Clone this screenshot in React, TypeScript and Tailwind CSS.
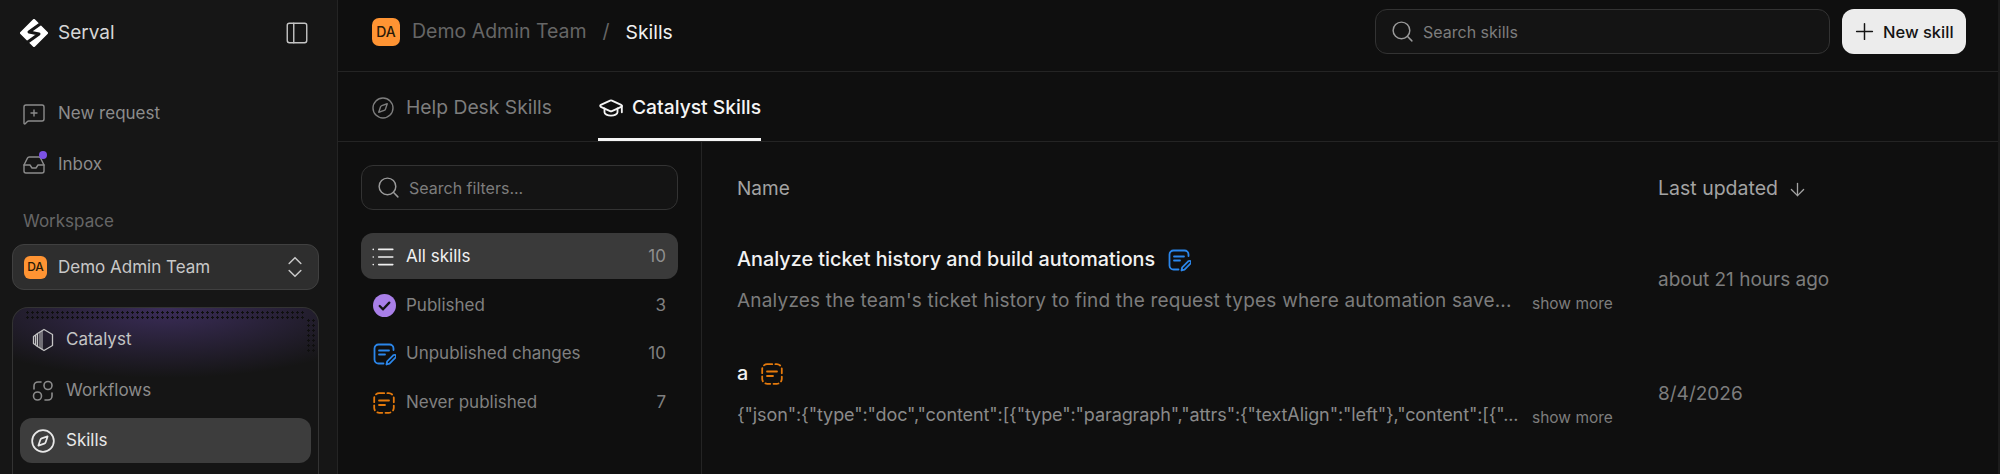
import {
  ArrowDown,
  ChevronsUpDown,
  Compass,
  GraduationCap,
  Inbox,
  List,
  MessageSquarePlus,
  PanelLeft,
  Plus,
  Search,
} from "lucide-react";

function Logo() {
  return (
    <svg viewBox="0 0 28 28" className="h-7 w-7" fill="none">
      <path d="M14 1.5 26.5 14 14 26.5 1.5 14Z" fill="#fff" stroke="#fff" strokeWidth="3" strokeLinejoin="round" />
      <path d="M23 3 9 13l10 2L5 25" stroke="#161616" strokeWidth="3" strokeLinejoin="round" />
    </svg>
  );
}

function CatalystIcon() {
  return (
    <svg viewBox="0 0 22 24" className="h-[24px] w-[22px]" fill="none" stroke="currentColor" strokeWidth="1.3" strokeLinejoin="round">
      <path d="M12 1.5 20.5 6.5V17.5L12 22.5 5.5 18.5V5.5Z" />
      <path d="M5.5 5.5 3.6 7V17L5.5 18.5M3.6 7 1.5 8.5V15.5L3.6 17" />
      <path d="M8 4V20M10 2.8V21.3" strokeWidth="1" />
    </svg>
  );
}

function WorkflowsIcon() {
  return (
    <svg viewBox="0 0 22 22" className="h-[22px] w-[22px]" fill="none" stroke="currentColor" strokeWidth="1.6" strokeLinecap="round">
      <circle cx="16" cy="5.5" r="4" />
      <circle cx="5.5" cy="16" r="4" />
      <path d="M2 9V6a4 4 0 0 1 4-4h3" />
      <path d="M20 13v3a4 4 0 0 1-4 4h-3" />
    </svg>
  );
}

function PublishedIcon() {
  return (
    <svg viewBox="0 0 24 24" className="h-[23px] w-[23px]">
      <circle cx="12" cy="12" r="12" fill="#a97fe8" />
      <path d="M7 12.5 10.5 16 17 9" fill="none" stroke="#141414" strokeWidth="2.4" strokeLinecap="round" strokeLinejoin="round" />
    </svg>
  );
}

function UnpublishedIcon() {
  return (
    <svg viewBox="0 0 23 23" className="h-[23px] w-[23px]" fill="none" stroke="#2b86ea" strokeWidth="1.8" strokeLinecap="round" strokeLinejoin="round">
      <path d="M20.5 7V5.5a4 4 0 0 0-4-4h-11a4 4 0 0 0-4 4v11a4 4 0 0 0 4 4h5" />
      <path d="M6 7.5h10M6 11.5h6" />
      <path d="M13.5 21.5l.7-3.2 6-6c.8-.7 2-.7 2.5 0 .5.7.4 1.7-.2 2.3l-6 6z" />
    </svg>
  );
}

function NeverPublishedIcon() {
  return (
    <svg viewBox="0 0 22 22" className="h-[22px] w-[22px]" fill="none" stroke="#e57a0c" strokeWidth="1.8" strokeLinecap="round">
      <rect x="1.2" y="1.2" width="19.6" height="19.6" rx="5" strokeDasharray="5 3.2" />
      <path d="M6 8.5h10M6 13h6" />
    </svg>
  );
}

function Avatar({ big }: { big?: boolean }) {
  return (
    <div
      className={
        big
          ? "flex h-[28px] w-[28px] items-center justify-center rounded-[7px] bg-[#ff9433] text-[14px] font-medium text-[#2a1a08]"
          : "flex h-[23px] w-[23px] items-center justify-center rounded-[6px] bg-[#ff9433] text-[12px] font-medium text-[#2a1a08]"
      }
    >
      DA
    </div>
  );
}

function Sidebar() {
  return (
    <aside className="flex h-[474px] w-[338px] shrink-0 flex-col overflow-hidden border-r border-[#242424] bg-[#161616] text-[17px]">
      <div className="flex h-[66px] items-center justify-between pl-5 pr-[27px]">
        <div className="flex items-center gap-[10px]">
          <Logo />
          <span className="text-[19px] text-[#d6d6d6]">Serval</span>
        </div>
        <PanelLeft className="h-[26px] w-[26px] text-[#c4c4c4]" strokeWidth={1.3} />
      </div>
      <div className="mt-[23px] flex h-[50px] items-center gap-3 pl-[22px] text-[#8c8c8c]">
        <MessageSquarePlus className="h-6 w-6" strokeWidth={1.4} />
        New request
      </div>
      <div className="flex h-[51px] items-center gap-3 pl-[22px] text-[#8c8c8c]">
        <div className="relative">
          <Inbox className="h-6 w-6" strokeWidth={1.4} />
          <span className="absolute -right-[1px] -top-[2px] h-2 w-2 rounded-full bg-[#7c52e6]" />
        </div>
        Inbox
      </div>
      <div className="mt-[19px] pl-[23px] leading-[24px] text-[#666666]">Workspace</div>
      <div className="ml-3 mr-[18px] mt-[11px] flex h-[46px] shrink-0 items-center rounded-xl border border-[#404040] bg-[#2e2e2e] pl-[11px] pr-[9px] text-[#c8c8c8]">
        <Avatar />
        <span className="ml-[11px] flex-1 pt-[2px]">Demo Admin Team</span>
        <ChevronsUpDown className="h-7 w-7" strokeWidth={1.3} />
      </div>
      <div className="relative ml-3 mr-[18px] mt-[17px] flex-1 rounded-t-2xl border border-b-0 border-[#333333] bg-[radial-gradient(ellipse_75%_70px_at_50%_0%,#3b2d59,#151515)] px-[7px] pt-[7px]">
        <div className="absolute inset-x-3 top-[2px] h-[9px] bg-[radial-gradient(#0f0f0f_1px,transparent_1.4px)] bg-[length:5px_5px]" />
        <div className="absolute right-[1px] top-[10px] h-[36px] w-[11px] bg-[radial-gradient(#0f0f0f_1px,transparent_1.4px)] bg-[length:5px_5px]" />
        <div className="relative flex h-[50px] items-center pl-3 text-[#c4c4c4]">
          <span className="w-[34px]"><CatalystIcon /></span>
          Catalyst
        </div>
        <div className="relative flex h-[52px] items-center pl-3 text-[#8c8c8c]">
          <span className="w-[34px]"><WorkflowsIcon /></span>
          Workflows
        </div>
        <div className="relative mt-[1px] flex h-[45px] items-center rounded-xl bg-[#3d3d3d] pl-3 text-[#e8e8e8]">
          <span className="w-[34px]"><Compass className="-ml-[2px] h-[26px] w-[26px]" strokeWidth={1.6} /></span>
          <span className="pt-[1px]">Skills</span>
        </div>
      </div>
    </aside>
  );
}

function TopBar() {
  return (
    <header className="flex h-[72px] items-center border-b border-[#242424] pb-2 pl-[34px] pr-[32px]">
      <Avatar big />
      <span className="ml-3 pt-[1px] text-[19.5px] text-[#666666]">Demo Admin Team</span>
      <span className="ml-4 pt-[1px] text-[19.5px] text-[#666666]">/</span>
      <span className="ml-4 pt-[1px] text-[19.3px] text-[#f2f2f2]">Skills</span>
      <div className="ml-auto flex h-[45px] w-[455px] items-center gap-2 rounded-xl border border-[#333333] bg-[#141414] pl-[14px] text-[16px] text-[#7d7d7d]">
        <Search className="h-[25px] w-[25px] text-[#9a9a9a]" strokeWidth={1.4} />
        <span className="pt-[1px]">Search skills</span>
      </div>
      <button className="ml-3 flex h-[45px] w-[124px] items-center gap-[5px] rounded-xl bg-[#ececec] pl-[9px] text-[16.5px] font-medium text-[#141414]">
        <Plus className="h-[27px] w-[27px]" strokeWidth={1.3} />
        <span className="pt-[1px]">New skill</span>
      </button>
    </header>
  );
}

function Tabs() {
  return (
    <div className="flex h-[70px] items-stretch gap-[46px] border-b border-[#242424] pl-[33px] text-[19.3px]">
      <div className="flex items-center gap-[11px] pt-[2px] text-[#7d7d7d]">
        <Compass className="h-6 w-6" strokeWidth={1.4} />
        Help Desk Skills
      </div>
      <div className="flex items-center gap-[8px] border-b-[3px] border-[#f5f5f5] pt-[5px] font-medium text-[#f5f5f5]">
        <GraduationCap className="h-[26px] w-[26px]" strokeWidth={1.7} />
        Catalyst Skills
      </div>
    </div>
  );
}

const filters = [
  { label: "All skills", count: 10, icon: <List className="-ml-[3px] h-[26px] w-[26px]" strokeWidth={1.5} />, active: true },
  { label: "Published", count: 3, icon: <PublishedIcon /> },
  { label: "Unpublished changes", count: 10, icon: <UnpublishedIcon /> },
  { label: "Never published", count: 7, icon: <NeverPublishedIcon /> },
];

function Filters() {
  return (
    <div className="w-[364px] shrink-0 border-r border-[#242424] pl-[23px] pr-[23px] pt-[23px]">
      <div className="flex h-[45px] items-center gap-2 rounded-xl border border-[#333333] bg-[#141414] pl-[14px] text-[16px] text-[#7d7d7d]">
        <Search className="h-[25px] w-[25px] text-[#9a9a9a]" strokeWidth={1.4} />
        Search filters...
      </div>
      <div className="mt-[23px] flex flex-col gap-[2.5px]">
        {filters.map((f) => (
          <div
            key={f.label}
            className={
              f.active
                ? "flex h-[46px] items-center rounded-xl bg-[#3a3a3a] px-3 pt-[2px] text-[17px] text-[#f0f0f0]"
                : "flex h-[46px] items-center rounded-xl px-3 pt-[2px] text-[17px] text-[#808080]"
            }
          >
            <span className="flex w-[33px] shrink-0 items-center">{f.icon}</span>
            <span className="flex-1">{f.label}</span>
            <span className={f.active ? "text-[#8f8f8f]" : ""}>{f.count}</span>
          </div>
        ))}
      </div>
    </div>
  );
}

const rows = [
  {
    title: "Analyze ticket history and build automations",
    icon: <UnpublishedIcon />,
    desc: "Analyzes the team's ticket history to find the request types where automation save...",
    descClass: "w-[795px] truncate text-[19px] leading-6 tracking-[0.2px] text-[#7c7c7c]",
    date: "about 21 hours ago",
  },
  {
    title: "a",
    icon: <NeverPublishedIcon />,
    desc: '{"json":{"type":"doc","content":[{"type":"paragraph","attrs":{"textAlign":"left"},"content":[{"...',
    descClass: "w-[795px] truncate text-[18px] leading-6 tracking-[-0.1px] text-[#8a8a8a]",
    date: "8/4/2026",
  },
];

function Table() {
  return (
    <div className="min-w-0 flex-1 pl-[35px]">
      <div className="flex h-[80px] items-center pt-[14px] text-[19px] text-[#a3a3a3]">
        <span className="w-[921px]">Name</span>
        <span className="text-[19.5px]">Last updated</span>
        <ArrowDown className="ml-[9px] h-[21px] w-[21px]" strokeWidth={1.5} />
      </div>
      {rows.map((r) => (
        <div key={r.title} className="flex h-[114px] items-center pt-[3px]">
          <div className="w-[921px] shrink-0">
            <div className="flex h-6 items-center gap-[13px] text-[19.8px] font-medium text-[#f2f2f2]">
              {r.title}
              {r.icon}
            </div>
            <div className="mt-[17px] flex h-6 items-start">
              <span className={r.descClass}>{r.desc}</span>
              <span className="pt-[3px] text-[15.5px] leading-6 text-[#7d7d7d]">show more</span>
            </div>
          </div>
          <span className="text-[19px] text-[#7d7d7d]">{r.date}</span>
        </div>
      ))}
    </div>
  );
}

export default function App() {
  return (
    <div className="flex h-[474px] w-[2000px] overflow-hidden bg-[#0f0f0f] font-['Inter',sans-serif]">
      <Sidebar />
      <main className="flex min-w-0 flex-1 flex-col border-r-2 border-[#1c1c1c]">
        <TopBar />
        <Tabs />
        <div className="flex min-h-0 flex-1">
          <Filters />
          <Table />
        </div>
      </main>
    </div>
  );
}
